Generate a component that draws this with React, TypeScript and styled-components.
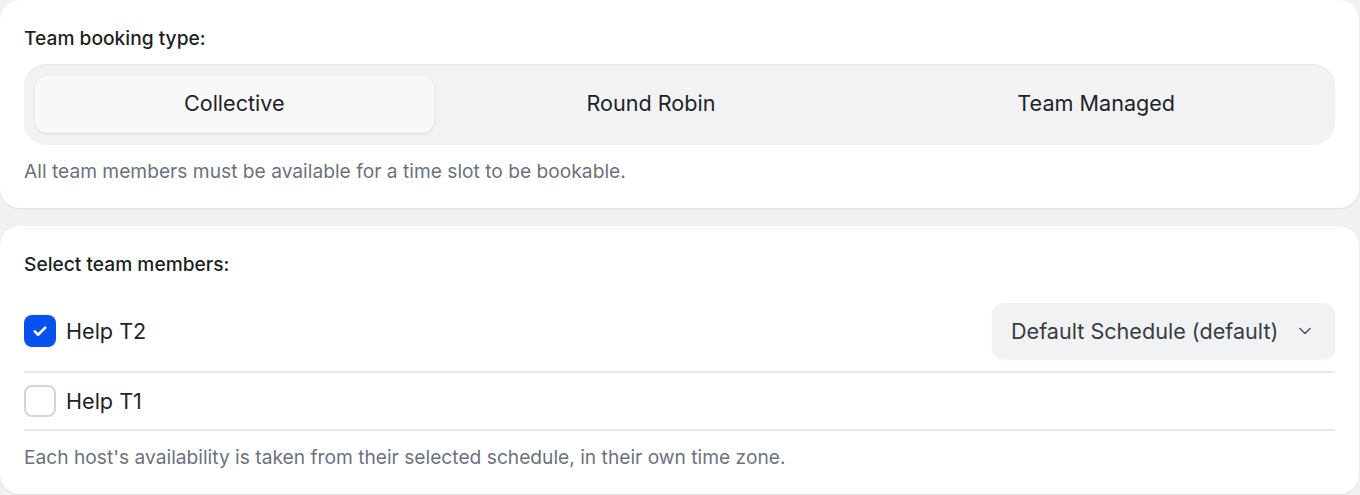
import React, { useState } from "react";
import styled, { createGlobalStyle } from "styled-components";

const Global = createGlobalStyle`
  html, body { margin: 0; padding: 0; background: #f0f1f3; }
  body { font-family: Inter, "Noto Sans", "Liberation Sans", sans-serif; -webkit-font-smoothing: antialiased; }
  * { box-sizing: border-box; }
`;

const Page = styled.div`
  display: flex;
  flex-direction: column;
  gap: 18px;
  padding: 0 1px 2px 0;
`;

const Card = styled.section`
  background: #ffffff;
  border-radius: 20px;
  box-shadow: 0 1px 2px rgba(16, 24, 40, 0.08);
  padding: 26px 24px 25px;
  display: flex;
  flex-direction: column;
`;

const Label = styled.div`
  font-size: 19.2px;
  line-height: 24px;
  font-weight: 500;
  color: #1d1f23;
`;

const Segmented = styled.div`
  margin-top: 14px;
  display: flex;
  gap: 4px;
  padding: 12px 11px;
  background: #f1f2f4;
  border-radius: 22px;
  box-shadow: inset 0 1px 1px rgba(0, 0, 0, 0.04);
`;

const Segment = styled.button<{ $active?: boolean }>`
  flex: 1 1 auto;
  height: 57px;
  padding: 0 0 3px;
  border: none;
  border-radius: 12px;
  font-family: inherit;
  font-size: 21.6px;
  font-weight: 400;
  color: #1f2328;
  background: ${(p) => (p.$active ? "#f7f8f8" : "transparent")};
  box-shadow: ${(p) => (p.$active ? "0 1px 3px rgba(16,24,40,0.10)" : "none")};
  cursor: pointer;
`;

const Hint = styled.p`
  margin: 14px 0 0;
  font-size: 19.2px;
  line-height: 24px;
  color: #6b7280;
`;

const Rows = styled.div`
  margin-top: 15px;
  display: flex;
  flex-direction: column;
`;

const Row = styled.div`
  display: flex;
  align-items: center;
  justify-content: space-between;
  padding: 12px 0;
  border-bottom: 2px solid #e5e7eb;
`;

const Member = styled.label`
  display: flex;
  align-items: center;
  gap: 10px;
  font-size: 21.6px;
  line-height: 28px;
  color: #1f2328;
  cursor: pointer;
`;

const Box = styled.span<{ $checked?: boolean }>`
  width: 32px;
  height: 32px;
  border-radius: 8px;
  display: inline-flex;
  align-items: center;
  justify-content: center;
  background: ${(p) => (p.$checked ? "#0552ee" : "#ffffff")};
  border: ${(p) => (p.$checked ? "none" : "2px solid #d1d5db")};
`;

const Select = styled.button`
  height: 56px;
  width: 343px;
  display: flex;
  align-items: center;
  justify-content: space-between;
  padding: 0 20px 0 19px;
  border: none;
  border-radius: 12px;
  background: #f1f2f4;
  box-shadow: 0 1px 2px rgba(16, 24, 40, 0.06);
  font-family: inherit;
  font-size: 21.6px;
  color: #383c43;
  cursor: pointer;
`;

const Check = () => (
  <svg width="18" height="18" viewBox="0 0 24 24" fill="none" stroke="#fff" strokeWidth="3.4" strokeLinecap="round" strokeLinejoin="round">
    <path d="M5 12.5l4.5 4.5L19 7.5" />
  </svg>
);

const Chevron = () => (
  <svg width="20" height="20" viewBox="0 0 24 24" fill="none" stroke="#4b5563" strokeWidth="1.8" strokeLinecap="round" strokeLinejoin="round">
    <path d="M6 9l6 6 6-6" />
  </svg>
);

export default function App() {
  const [type, setType] = useState("Collective");
  const [members, setMembers] = useState({ t2: true, t1: false });
  return (
    <>
      <Global />
      <Page>
        <Card>
          <Label>Team booking type:</Label>
          <Segmented>
            {["Collective", "Round Robin", "Team Managed"].map((t) => (
              <Segment key={t} $active={type === t} onClick={() => setType(t)}>
                {t}
              </Segment>
            ))}
          </Segmented>
          <Hint>All team members must be available for a time slot to be bookable.</Hint>
        </Card>
        <Card>
          <Label>Select team members:</Label>
          <Rows>
            <Row>
              <Member onClick={() => setMembers((m) => ({ ...m, t2: !m.t2 }))}>
                <Box $checked={members.t2}>{members.t2 && <Check />}</Box>
                Help T2
              </Member>
              <Select>
                Default Schedule (default)
                <Chevron />
              </Select>
            </Row>
            <Row>
              <Member onClick={() => setMembers((m) => ({ ...m, t1: !m.t1 }))}>
                <Box $checked={members.t1}>{members.t1 && <Check />}</Box>
                Help T1
              </Member>
            </Row>
          </Rows>
          <Hint>Each host's availability is taken from their selected schedule, in their own time zone.</Hint>
        </Card>
      </Page>
    </>
  );
}
